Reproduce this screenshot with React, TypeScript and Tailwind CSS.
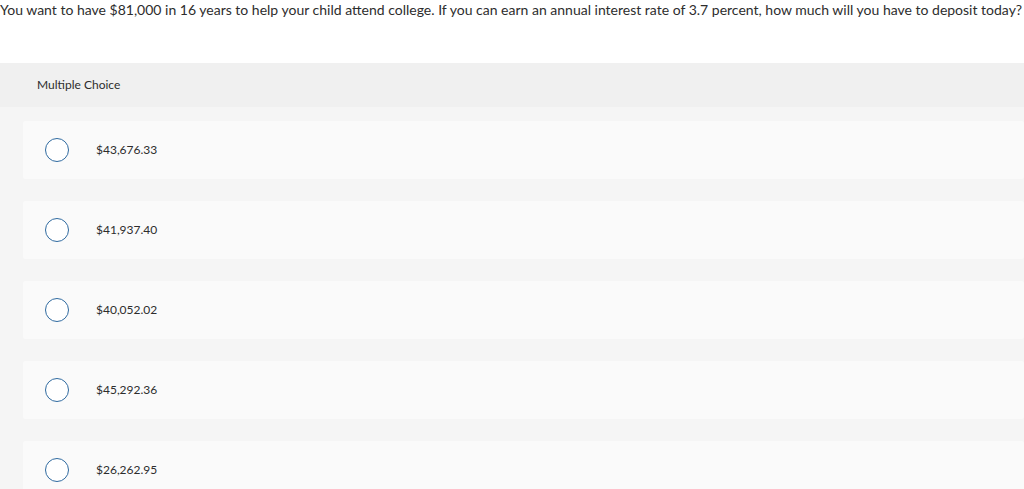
import React from 'react';

const choices = ['$43,676.33', '$41,937.40', '$40,052.02', '$45,292.36', '$26,262.95'];

const App: React.FC = () => {
  return (
    <div className="w-[1024px] h-[489px] overflow-hidden bg-white text-[#2d2d2d] font-['Lato','Liberation_Sans',sans-serif]">
      <p className="h-[28px] pt-[1px] text-[14px] leading-[18px] whitespace-nowrap">
        You want to have $81,000 in 16 years to help your child attend college. If you can earn an annual interest rate of 3.7 percent, how much will you have to deposit today?
      </p>
      <div className="mt-[35px] bg-[#f5f5f5]">
        <div className="h-[44px] bg-[#f0f0f0] pl-[37px] flex items-center text-[12px]">
          Multiple Choice
        </div>
        <div className="flex flex-col gap-[22px] pt-[14px] pl-[23px]">
          {choices.map((c) => (
            <div key={c} className="h-[58px] bg-[#fafafa] rounded-[2px] flex items-center">
              <span className="ml-[22px] w-[24px] h-[24px] rounded-full border-[1.5px] border-[#2f6aa0] bg-white shrink-0" />
              <span className="ml-[27px] text-[12px]">{c}</span>
            </div>
          ))}
        </div>
      </div>
    </div>
  );
};

export default App;
